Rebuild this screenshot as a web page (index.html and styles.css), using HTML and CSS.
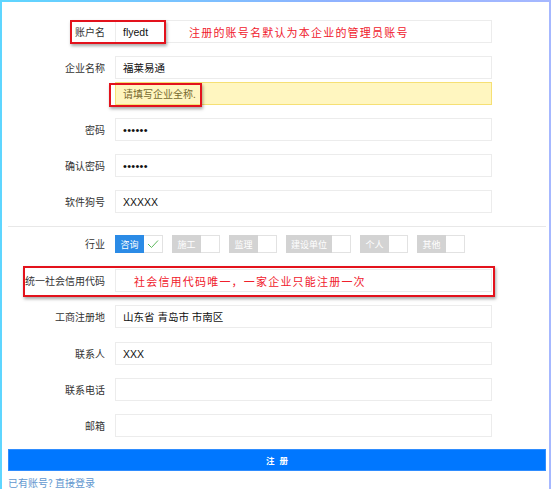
FILE: index.html
```html
<!DOCTYPE html>
<html lang="zh-CN">
<head>
<meta charset="utf-8">
<title>注册</title>
<link rel="stylesheet" href="styles.css">
</head>
<body>
<div class="frame">
  <div class="panel">
    <div class="form">
      <div class="row">
        <div class="label">账户名</div>
        <div class="field field-account"><span class="val">flyedt</span><span class="note">注册的账号名默认为本企业的管理员账号</span></div>
      </div>
      <div class="row row-hint">
        <div class="label">企业名称</div>
        <div class="field"><span class="val">福莱易通</span></div>
        <div class="hint">请填写企业全称.</div>
      </div>
      <div class="row">
        <div class="label">密码</div>
        <div class="field"><span class="dots">••••••</span></div>
      </div>
      <div class="row">
        <div class="label">确认密码</div>
        <div class="field"><span class="dots">••••••</span></div>
      </div>
      <div class="row">
        <div class="label">软件狗号</div>
        <div class="field"><span class="val">XXXXX</span></div>
      </div>
      <div class="divider"></div>
      <div class="row row-chips">
        <div class="label">行业</div>
        <div class="chips">
          <div class="chip on"><span class="chip-label">咨询</span><span class="chip-box"><svg width="12" height="10" viewBox="0 0 12 10"><polyline points="1,5 4.5,8.5 11,1.5" fill="none" stroke="#5cb85c" stroke-width="1"/></svg></span></div>
          <div class="chip"><span class="chip-label">施工</span><span class="chip-box"></span></div>
          <div class="chip"><span class="chip-label">监理</span><span class="chip-box"></span></div>
          <div class="chip"><span class="chip-label wide">建设单位</span><span class="chip-box"></span></div>
          <div class="chip"><span class="chip-label">个人</span><span class="chip-box"></span></div>
          <div class="chip"><span class="chip-label">其他</span><span class="chip-box"></span></div>
        </div>
      </div>
      <div class="row">
        <div class="label">统一社会信用代码</div>
        <div class="field field-credit"><span class="note">社会信用代码唯一，一家企业只能注册一次</span></div>
      </div>
      <div class="row row-wide">
        <div class="label">工商注册地</div>
        <div class="field"><span class="val">山东省 青岛市 市南区</span></div>
      </div>
      <div class="row">
        <div class="label">联系人</div>
        <div class="field"><span class="val">XXX</span></div>
      </div>
      <div class="row">
        <div class="label">联系电话</div>
        <div class="field"></div>
      </div>
      <div class="row row-last">
        <div class="label">邮箱</div>
        <div class="field"></div>
      </div>
      <button class="submit" type="button">注册</button>
      <a class="login" href="#">已有账号? 直接登录</a>

      <div class="mark mark-account"></div>
      <div class="mark mark-hint"></div>
      <div class="mark mark-credit"></div>
    </div>
  </div>
</div>
</body>
</html>
```
FILE: styles.css
```css
html, body {
  margin: 0;
  padding: 0;
  background: #ffffff;
}

body {
  font-family: "Liberation Sans", "Noto Sans CJK SC", sans-serif;
  color: #333333;
}

.frame {
  width: 551px;
  height: 489px;
  box-sizing: border-box;
  padding: 2px 2px 0 2px;
  background: linear-gradient(90deg, #5ed6ff 0%, #8fb2ff 60%, #a6b8ff 100%);
}

.panel {
  height: 100%;
  background: #ffffff;
  padding: 0 3px 0 6px;
}

.form {
  position: relative;
  padding-top: 18px;
}

.row {
  display: grid;
  grid-template-columns: 97px 377px;
  column-gap: 10px;
  align-items: center;
  margin-bottom: 13px;
}

.row-hint {
  row-gap: 3px;
}

.row-hint .hint {
  grid-column: 2;
}

.row-wide {
  margin-bottom: 14px;
}

.row-last {
  margin-bottom: 12px;
}

.label {
  text-align: right;
  font-family: "Noto Sans CJK SC", sans-serif;
  font-size: 10px;
  color: #333333;
  line-height: 14px;
}

.field {
  height: 23px;
  box-sizing: border-box;
  border: 1px solid #ececec;
  padding: 0 7px;
  display: flex;
  align-items: center;
  background: #ffffff;
  font-size: 10.5px;
  color: #111111;
  font-family: "Liberation Sans", "Noto Sans CJK SC", sans-serif;
}

.val {
  line-height: 14px;
}

.dots {
  font-size: 11px;
  letter-spacing: 0.3px;
  color: #111111;
}

.field-account {
  display: grid;
  grid-template-columns: 66px 1fr;
  align-items: center;
}

.field-credit {
  padding-left: 18px;
}

.note {
  font-family: "Noto Sans CJK SC", sans-serif;
  font-size: 11px;
  letter-spacing: 1.2px;
  color: #f0202c;
  line-height: 14px;
  white-space: nowrap;
}

.hint {
  height: 23px;
  box-sizing: border-box;
  border: 1px solid #f6e074;
  background: #fff6c0;
  color: #76692f;
  font-family: "Noto Sans CJK SC", sans-serif;
  font-size: 10px;
  padding: 0 7px;
  display: flex;
  align-items: center;
}

.divider {
  height: 1px;
  background: #e8e8e8;
  margin-bottom: 8px;
}

.row-chips {
  margin-bottom: 16px;
}

.chips {
  display: flex;
  gap: 9px;
}

.chip {
  display: flex;
  height: 18px;
  flex-shrink: 0;
}

.chip-label {
  flex: 0 0 29px;
  height: 18px;
  background: #d3d3d3;
  color: #ffffff;
  font-family: "Noto Sans CJK SC", sans-serif;
  font-size: 9px;
  display: flex;
  align-items: center;
  justify-content: center;
}

.chip-label.wide {
  flex-basis: 46px;
}

.chip.on .chip-label {
  background: #2b8be6;
}

.chip-box {
  flex: 0 0 19px;
  height: 18px;
  box-sizing: border-box;
  border: 1px solid #e2e2e2;
  border-left: none;
  background: #ffffff;
  display: flex;
  align-items: center;
  justify-content: center;
}

.submit {
  display: block;
  width: 100%;
  height: 22px;
  border: 1px solid #2f8dff;
  background: #0077ff;
  color: #ffffff;
  font-family: "Noto Sans CJK SC", sans-serif;
  font-size: 8.5px;
  font-weight: bold;
  letter-spacing: 5px;
  text-indent: 5px;
  padding: 0;
  margin: 0 0 6px 0;
  cursor: pointer;
}

.login {
  display: block;
  font-family: "Noto Sans CJK SC", sans-serif;
  font-size: 10px;
  line-height: 12px;
  color: #5f97cf;
  text-decoration: none;
}

.mark {
  position: absolute;
  box-sizing: border-box;
  border: 2px solid #e3121c;
  box-shadow: 1px 2px 3px rgba(0, 0, 0, 0.35);
  pointer-events: none;
}

.mark-account {
  left: 62px;
  top: 18px;
  width: 96px;
  height: 24px;
}

.mark-hint {
  left: 101px;
  top: 81px;
  width: 93px;
  height: 24px;
}

.mark-credit {
  left: 15px;
  top: 264px;
  width: 472px;
  height: 31px;
}
```
